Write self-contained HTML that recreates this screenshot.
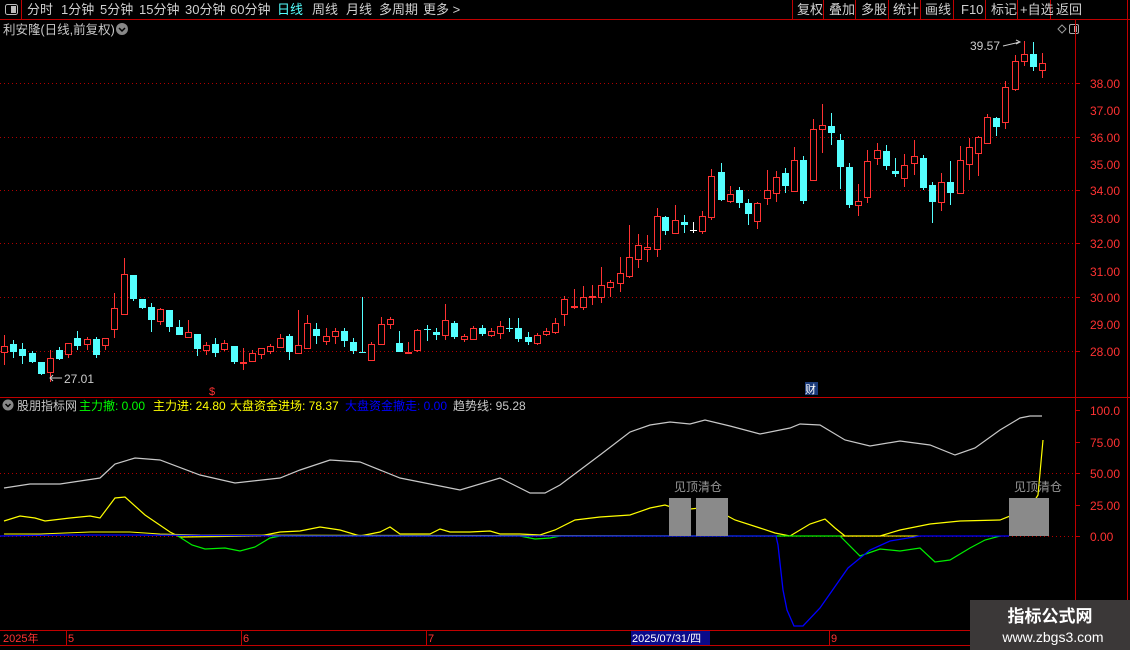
<!DOCTYPE html>
<html><head><meta charset="utf-8">
<style>
html,body{margin:0;padding:0;background:#000;width:1130px;height:650px;overflow:hidden}
svg{display:block}
text{font-family:"Liberation Sans","Noto Sans CJK SC",sans-serif}
.r line{stroke:#ff3232;stroke-width:1}
.r rect{fill:#000;stroke:#ff3232;stroke-width:1}
.c line{stroke:#54ffff;stroke-width:1}
.c rect{fill:#54ffff}
</style></head><body>
<svg width="1130" height="650" xmlns="http://www.w3.org/2000/svg">
<rect width="1130" height="650" fill="#000"/>
<line x1="0" y1="19.5" x2="1130" y2="19.5" stroke="#c00000"/>
<line x1="21.5" y1="0" x2="21.5" y2="19" stroke="#c00000"/>
<rect x="5.5" y="4.5" width="12" height="10" rx="2" fill="none" stroke="#bbb"/>
<rect x="11" y="6" width="5" height="7" fill="#bbb"/>
<g font-size="13" fill="#d0d0d0">
<text x="27" y="14">分时</text><text x="61" y="14">1分钟</text><text x="100" y="14">5分钟</text><text x="139" y="14">15分钟</text><text x="185" y="14">30分钟</text><text x="230" y="14">60分钟</text>
<text x="277" y="14" fill="#54ffff">日线</text><text x="312" y="14">周线</text><text x="346" y="14">月线</text><text x="379" y="14">多周期</text><text x="423" y="14">更多 &gt;</text>
</g>
<g stroke="#c00000"><line x1="792.5" y1="0" x2="792.5" y2="19"/><line x1="823.5" y1="0" x2="823.5" y2="19"/><line x1="855.5" y1="0" x2="855.5" y2="19"/><line x1="888.5" y1="0" x2="888.5" y2="19"/><line x1="920.5" y1="0" x2="920.5" y2="19"/><line x1="953.5" y1="0" x2="953.5" y2="19"/><line x1="985.5" y1="0" x2="985.5" y2="19"/><line x1="1017.5" y1="0" x2="1017.5" y2="19"/><line x1="1050.5" y1="0" x2="1050.5" y2="19"/><line x1="1127.5" y1="0" x2="1127.5" y2="650"/></g>
<g font-size="13" fill="#d0d0d0">
<text x="797" y="14">复权</text><text x="829" y="14">叠加</text><text x="861" y="14">多股</text><text x="893" y="14">统计</text><text x="925" y="14">画线</text><text x="961" y="14">F10</text><text x="991" y="14">标记</text><text x="1020" y="14">+自选</text><text x="1056" y="14">返回</text>
</g>
<text x="3" y="34" font-size="12.5" fill="#c8c8c8">利安隆(日线,前复权)</text>
<circle cx="122" cy="29" r="6" fill="#888"/><path d="M119 28l3 3 3-3" stroke="#000" stroke-width="1.5" fill="none"/>
<path d="M1062 25l4 4-4 4-4-4z" fill="none" stroke="#999"/>
<rect x="1069.5" y="24.5" width="9" height="9" rx="1.5" fill="none" stroke="#aaa"/><rect x="1074" y="26" width="3" height="6" fill="#aaa"/>
<line x1="1075.5" y1="20" x2="1075.5" y2="645" stroke="#c00000"/>
<line x1="0" y1="397.5" x2="1130" y2="397.5" stroke="#c00000"/>
<line x1="0" y1="630.5" x2="1130" y2="630.5" stroke="#c00000"/>
<line x1="0" y1="645.5" x2="1130" y2="645.5" stroke="#c00000"/>
<g stroke="#b00000" stroke-dasharray="1,3">
<line x1="0" y1="83.5" x2="1075" y2="83.5"/><line x1="0" y1="137.5" x2="1075" y2="137.5"/><line x1="0" y1="190.5" x2="1075" y2="190.5"/><line x1="0" y1="243.5" x2="1075" y2="243.5"/><line x1="0" y1="297.5" x2="1075" y2="297.5"/><line x1="0" y1="351.5" x2="1075" y2="351.5"/>
<line x1="0" y1="473.5" x2="1075" y2="473.5"/><line x1="0" y1="536.5" x2="1075" y2="536.5"/>
</g>
<g font-size="12" fill="#ff3232">
<text x="1090" y="88">38.00</text><text x="1090" y="115">37.00</text><text x="1090" y="142">36.00</text><text x="1090" y="169">35.00</text><text x="1090" y="195">34.00</text><text x="1090" y="223">33.00</text><text x="1090" y="248">32.00</text><text x="1090" y="276">31.00</text><text x="1090" y="302">30.00</text><text x="1090" y="329">29.00</text><text x="1090" y="356">28.00</text>
<text x="1090" y="415">100.0</text><text x="1090" y="447">75.00</text><text x="1090" y="478">50.00</text><text x="1090" y="510">25.00</text><text x="1090" y="541">0.00</text>
</g>
<g stroke="#c00000"><line x1="1075" y1="83.5" x2="1080" y2="83.5"/><line x1="1075" y1="137.5" x2="1080" y2="137.5"/><line x1="1075" y1="190.5" x2="1080" y2="190.5"/><line x1="1075" y1="243.5" x2="1080" y2="243.5"/><line x1="1075" y1="297.5" x2="1080" y2="297.5"/><line x1="1075" y1="351.5" x2="1080" y2="351.5"/><line x1="1075" y1="410.5" x2="1080" y2="410.5"/><line x1="1075" y1="442.5" x2="1080" y2="442.5"/><line x1="1075" y1="473.5" x2="1080" y2="473.5"/><line x1="1075" y1="505.5" x2="1080" y2="505.5"/><line x1="1075" y1="536.5" x2="1080" y2="536.5"/></g>

<!-- cyan candles -->
<g class="c">
<line x1="13.5" y1="340" x2="13.5" y2="358"/><rect x="10" y="344" width="7" height="8"/>
<line x1="22.5" y1="343" x2="22.5" y2="364"/><rect x="19" y="349" width="7" height="7"/>
<line x1="32.5" y1="351" x2="32.5" y2="363"/><rect x="29" y="353" width="7" height="9"/>
<line x1="41.5" y1="362" x2="41.5" y2="375"/><rect x="38" y="362" width="7" height="12"/>
<line x1="59.5" y1="347" x2="59.5" y2="360"/><rect x="56" y="350" width="7" height="9"/>
<line x1="77.5" y1="331" x2="77.5" y2="350"/><rect x="74" y="338" width="7" height="8"/>
<line x1="96.5" y1="337" x2="96.5" y2="358"/><rect x="93" y="339" width="7" height="16"/>
<line x1="133.5" y1="275" x2="133.5" y2="301"/><rect x="130" y="275" width="7" height="24"/>
<line x1="142.5" y1="299" x2="142.5" y2="309"/><rect x="139" y="299" width="7" height="9"/>
<line x1="151.5" y1="303" x2="151.5" y2="332"/><rect x="148" y="307" width="7" height="13"/>
<line x1="169.5" y1="310" x2="169.5" y2="332"/><rect x="166" y="310" width="7" height="17"/>
<line x1="179.5" y1="320" x2="179.5" y2="335"/><rect x="176" y="327" width="7" height="8"/>
<line x1="197.5" y1="334" x2="197.5" y2="356"/><rect x="194" y="334" width="7" height="15"/>
<line x1="215.5" y1="338" x2="215.5" y2="357"/><rect x="212" y="344" width="7" height="9"/>
<line x1="234.5" y1="346" x2="234.5" y2="364"/><rect x="231" y="346" width="7" height="16"/>
<line x1="289.5" y1="334" x2="289.5" y2="360"/><rect x="286" y="336" width="7" height="16"/>
<line x1="316.5" y1="323" x2="316.5" y2="344"/><rect x="313" y="329" width="7" height="7"/>
<line x1="344.5" y1="328" x2="344.5" y2="347"/><rect x="341" y="331" width="7" height="10"/>
<line x1="353.5" y1="338" x2="353.5" y2="354"/><rect x="350" y="342" width="7" height="9"/>
<line x1="362.5" y1="297" x2="362.5" y2="353"/><rect x="359" y="352" width="7" height="1"/>
<line x1="399.5" y1="331" x2="399.5" y2="352"/><rect x="396" y="343" width="7" height="9"/>
<line x1="427.5" y1="325" x2="427.5" y2="341"/><rect x="424" y="329" width="7" height="1"/>
<line x1="436.5" y1="328" x2="436.5" y2="340"/><rect x="433" y="332" width="7" height="3"/>
<line x1="454.5" y1="321" x2="454.5" y2="339"/><rect x="451" y="323" width="7" height="14"/>
<line x1="482.5" y1="325" x2="482.5" y2="336"/><rect x="479" y="328" width="7" height="6"/>
<line x1="509.5" y1="318" x2="509.5" y2="332"/><rect x="506" y="328" width="7" height="1"/>
<line x1="518.5" y1="318" x2="518.5" y2="342"/><rect x="515" y="328" width="7" height="11"/>
<line x1="528.5" y1="332" x2="528.5" y2="345"/><rect x="525" y="337" width="7" height="5"/>
<line x1="665.5" y1="216" x2="665.5" y2="235"/><rect x="662" y="217" width="7" height="14"/>
<line x1="684.5" y1="215" x2="684.5" y2="233"/><rect x="681" y="222" width="7" height="3"/>
<line x1="721.5" y1="163" x2="721.5" y2="201"/><rect x="718" y="172" width="7" height="28"/>
<line x1="739.5" y1="187" x2="739.5" y2="208"/><rect x="736" y="190" width="7" height="13"/>
<line x1="748.5" y1="199" x2="748.5" y2="225"/><rect x="745" y="203" width="7" height="11"/>
<line x1="785.5" y1="168" x2="785.5" y2="193"/><rect x="782" y="173" width="7" height="13"/>
<line x1="803.5" y1="156" x2="803.5" y2="204"/><rect x="800" y="160" width="7" height="41"/>
<line x1="831.5" y1="113" x2="831.5" y2="145"/><rect x="828" y="126" width="7" height="7"/>
<line x1="840.5" y1="134" x2="840.5" y2="189"/><rect x="837" y="140" width="7" height="27"/>
<line x1="849.5" y1="163" x2="849.5" y2="208"/><rect x="846" y="167" width="7" height="38"/>
<line x1="886.5" y1="145" x2="886.5" y2="170"/><rect x="883" y="151" width="7" height="15"/>
<line x1="895.5" y1="158" x2="895.5" y2="177"/><rect x="892" y="171" width="7" height="3"/>
<line x1="923.5" y1="155" x2="923.5" y2="190"/><rect x="920" y="158" width="7" height="30"/>
<line x1="932.5" y1="182" x2="932.5" y2="223"/><rect x="929" y="185" width="7" height="17"/>
<line x1="950.5" y1="161" x2="950.5" y2="205"/><rect x="947" y="182" width="7" height="11"/>
<line x1="996.5" y1="117" x2="996.5" y2="136"/><rect x="993" y="118" width="7" height="9"/>
<line x1="1033.5" y1="42" x2="1033.5" y2="71"/><rect x="1030" y="54" width="7" height="13"/>
</g>
<!-- white cross -->
<path d="M693.5 222V233M690 230.5H697" stroke="#fff"/>
<!-- red candles -->
<g class="r">
<line x1="4.5" y1="335" x2="4.5" y2="365"/><rect x="1.5" y="346.5" width="6" height="6"/>
<line x1="50.5" y1="350" x2="50.5" y2="382"/><rect x="47.5" y="358.5" width="6" height="14"/>
<line x1="68.5" y1="343" x2="68.5" y2="358"/><rect x="65.5" y="343.5" width="6" height="11"/>
<line x1="87.5" y1="337" x2="87.5" y2="350"/><rect x="84.5" y="339.5" width="6" height="5"/>
<line x1="105.5" y1="338" x2="105.5" y2="350"/><rect x="102.5" y="338.5" width="6" height="7"/>
<line x1="114.5" y1="293" x2="114.5" y2="338"/><rect x="111.5" y="308.5" width="6" height="21"/>
<line x1="124.5" y1="258" x2="124.5" y2="314"/><rect x="121.5" y="274.5" width="6" height="40"/>
<line x1="160.5" y1="308" x2="160.5" y2="325"/><rect x="157.5" y="309.5" width="6" height="12"/>
<line x1="188.5" y1="320" x2="188.5" y2="337"/><rect x="185.5" y="332.5" width="6" height="5"/>
<line x1="206.5" y1="342" x2="206.5" y2="355"/><rect x="203.5" y="345.5" width="6" height="5"/>
<line x1="224.5" y1="340" x2="224.5" y2="351"/><rect x="221.5" y="343.5" width="6" height="6"/>
<line x1="243.5" y1="348" x2="243.5" y2="370"/><rect x="240.5" y="362.5" width="6" height="1"/>
<line x1="252.5" y1="350" x2="252.5" y2="362"/><rect x="249.5" y="353.5" width="6" height="8"/>
<line x1="261.5" y1="348" x2="261.5" y2="359"/><rect x="258.5" y="348.5" width="6" height="6"/>
<line x1="270.5" y1="344" x2="270.5" y2="354"/><rect x="267.5" y="346.5" width="6" height="5"/>
<line x1="280.5" y1="334" x2="280.5" y2="347"/><rect x="277.5" y="338.5" width="6" height="9"/>
<line x1="298.5" y1="310" x2="298.5" y2="353"/><rect x="295.5" y="345.5" width="6" height="8"/>
<line x1="307.5" y1="315" x2="307.5" y2="348"/><rect x="304.5" y="323.5" width="6" height="25"/>
<line x1="326.5" y1="328" x2="326.5" y2="345"/><rect x="323.5" y="336.5" width="6" height="5"/>
<line x1="335.5" y1="328" x2="335.5" y2="344"/><rect x="332.5" y="331.5" width="6" height="5"/>
<line x1="371.5" y1="342" x2="371.5" y2="361"/><rect x="368.5" y="344.5" width="6" height="16"/>
<line x1="381.5" y1="317" x2="381.5" y2="345"/><rect x="378.5" y="324.5" width="6" height="20"/>
<line x1="390.5" y1="317" x2="390.5" y2="329"/><rect x="387.5" y="319.5" width="6" height="5"/>
<line x1="408.5" y1="342" x2="408.5" y2="353"/><rect x="405.5" y="352.5" width="6" height="1"/>
<line x1="417.5" y1="329" x2="417.5" y2="352"/><rect x="414.5" y="330.5" width="6" height="20"/>
<line x1="445.5" y1="304" x2="445.5" y2="340"/><rect x="442.5" y="320.5" width="6" height="15"/>
<line x1="464.5" y1="334" x2="464.5" y2="342"/><rect x="461.5" y="336.5" width="6" height="3"/>
<line x1="473.5" y1="326" x2="473.5" y2="340"/><rect x="470.5" y="328.5" width="6" height="11"/>
<line x1="491.5" y1="328" x2="491.5" y2="337"/><rect x="488.5" y="331.5" width="6" height="4"/>
<line x1="500.5" y1="321" x2="500.5" y2="339"/><rect x="497.5" y="326.5" width="6" height="7"/>
<line x1="537.5" y1="333" x2="537.5" y2="345"/><rect x="534.5" y="335.5" width="6" height="8"/>
<line x1="546.5" y1="328" x2="546.5" y2="336"/><rect x="543.5" y="331.5" width="6" height="3"/>
<line x1="555.5" y1="318" x2="555.5" y2="334"/><rect x="552.5" y="323.5" width="6" height="9"/>
<line x1="564.5" y1="296" x2="564.5" y2="326"/><rect x="561.5" y="299.5" width="6" height="15"/>
<line x1="574.5" y1="289" x2="574.5" y2="309"/><rect x="571.5" y="306.5" width="6" height="1"/>
<line x1="583.5" y1="286" x2="583.5" y2="310"/><rect x="580.5" y="297.5" width="6" height="10"/>
<line x1="592.5" y1="285" x2="592.5" y2="305"/><rect x="589.5" y="296.5" width="6" height="1"/>
<line x1="601.5" y1="267" x2="601.5" y2="303"/><rect x="598.5" y="285.5" width="6" height="12"/>
<line x1="610.5" y1="280" x2="610.5" y2="297"/><rect x="607.5" y="282.5" width="6" height="5"/>
<line x1="620.5" y1="257" x2="620.5" y2="292"/><rect x="617.5" y="273.5" width="6" height="10"/>
<line x1="629.5" y1="225" x2="629.5" y2="278"/><rect x="626.5" y="257.5" width="6" height="19"/>
<line x1="638.5" y1="234" x2="638.5" y2="268"/><rect x="635.5" y="245.5" width="6" height="14"/>
<line x1="647.5" y1="235" x2="647.5" y2="262"/><rect x="644.5" y="247.5" width="6" height="2"/>
<line x1="657.5" y1="208" x2="657.5" y2="257"/><rect x="654.5" y="216.5" width="6" height="33"/>
<line x1="675.5" y1="205" x2="675.5" y2="234"/><rect x="672.5" y="220.5" width="6" height="13"/>
<line x1="702.5" y1="211" x2="702.5" y2="234"/><rect x="699.5" y="216.5" width="6" height="15"/>
<line x1="711.5" y1="169" x2="711.5" y2="220"/><rect x="708.5" y="176.5" width="6" height="41"/>
<line x1="730.5" y1="186" x2="730.5" y2="203"/><rect x="727.5" y="194.5" width="6" height="7"/>
<line x1="757.5" y1="202" x2="757.5" y2="229"/><rect x="754.5" y="203.5" width="6" height="18"/>
<line x1="767.5" y1="170" x2="767.5" y2="205"/><rect x="764.5" y="190.5" width="6" height="8"/>
<line x1="776.5" y1="171" x2="776.5" y2="202"/><rect x="773.5" y="177.5" width="6" height="16"/>
<line x1="794.5" y1="147" x2="794.5" y2="192"/><rect x="791.5" y="160.5" width="6" height="31"/>
<line x1="813.5" y1="119" x2="813.5" y2="180"/><rect x="810.5" y="129.5" width="6" height="51"/>
<line x1="822.5" y1="104" x2="822.5" y2="153"/><rect x="819.5" y="125.5" width="6" height="4"/>
<line x1="858.5" y1="184" x2="858.5" y2="216"/><rect x="855.5" y="201.5" width="6" height="4"/>
<line x1="867.5" y1="150" x2="867.5" y2="203"/><rect x="864.5" y="161.5" width="6" height="36"/>
<line x1="877.5" y1="143" x2="877.5" y2="165"/><rect x="874.5" y="150.5" width="6" height="8"/>
<line x1="904.5" y1="154" x2="904.5" y2="187"/><rect x="901.5" y="165.5" width="6" height="13"/>
<line x1="914.5" y1="140" x2="914.5" y2="175"/><rect x="911.5" y="156.5" width="6" height="7"/>
<line x1="941.5" y1="173" x2="941.5" y2="211"/><rect x="938.5" y="182.5" width="6" height="20"/>
<line x1="960.5" y1="146" x2="960.5" y2="193"/><rect x="957.5" y="160.5" width="6" height="33"/>
<line x1="969.5" y1="138" x2="969.5" y2="180"/><rect x="966.5" y="147.5" width="6" height="17"/>
<line x1="978.5" y1="136" x2="978.5" y2="176"/><rect x="975.5" y="137.5" width="6" height="16"/>
<line x1="987.5" y1="114" x2="987.5" y2="143"/><rect x="984.5" y="117.5" width="6" height="26"/>
<line x1="1005.5" y1="81" x2="1005.5" y2="129"/><rect x="1002.5" y="87.5" width="6" height="35"/>
<line x1="1015.5" y1="55" x2="1015.5" y2="91"/><rect x="1012.5" y="61.5" width="6" height="28"/>
<line x1="1024.5" y1="41" x2="1024.5" y2="66"/><rect x="1021.5" y="54.5" width="6" height="7"/>
<line x1="1042.5" y1="53" x2="1042.5" y2="78"/><rect x="1039.5" y="63.5" width="6" height="7"/>
</g>
<text x="970" y="50" font-size="12" fill="#ccc">39.57</text><path d="M1003 46 L1020 42 M1016 40l4 2-4 2" stroke="#ccc" fill="none"/>
<text x="64" y="383" font-size="12" fill="#ccc">27.01</text><path d="M62 378 H50 M53 375l-3 3 3 3" stroke="#ccc" fill="none"/>
<text x="209" y="395" font-size="11" fill="#ff3232">$</text>
<rect x="805" y="382" width="13" height="13" fill="#1a3a7a"/><text x="805" y="393" font-size="11" fill="#fff">财</text>
<circle cx="8" cy="405" r="5.5" fill="#888"/><path d="M5.5 404l2.5 2.5 2.5-2.5" stroke="#000" stroke-width="1.5" fill="none"/>
<g font-size="12">
<text x="17" y="410" fill="#c8c8c8">股朋指标网</text>
<text x="79" y="410" fill="#00ff00">主力撤: 0.00</text>
<text x="153" y="410" fill="#ffff00">主力进: 24.80</text>
<text x="230" y="410" fill="#ffff00">大盘资金进场: 78.37</text>
<text x="345" y="410" fill="#0000ff">大盘资金撤走: 0.00</text>
<text x="453" y="410" fill="#c8c8c8">趋势线: 95.28</text>
</g>
<polyline fill="none" stroke="#c8c8c8" stroke-width="1.2" points="4,488 30,484 60,484 100,478 115,464 135,458 160,460 200,475 235,483 280,478 300,470 330,460 360,462 400,478 430,484 460,490 500,478 530,493 545,493 560,485 600,455 630,432 650,425 670,422 690,424 705,420 730,426 760,434 790,428 800,424 820,425 845,440 870,446 900,441 930,445 955,455 975,448 1000,430 1020,418 1030,416 1042,416"/>
<polyline fill="none" stroke="#ffff00" stroke-width="1.2" points="4,521 20,516 35,518 45,521 70,518 90,516 100,518 115,498 125,497 145,515 170,532 180,537 260,536 280,532 300,531 320,527 340,530 360,536 380,532 390,527 400,534 430,534 440,529 450,532 470,532 490,531 500,534 520,534 540,535 555,530 575,520 600,517 630,515 650,508 665,505 680,510 700,508 720,512 735,520 760,528 775,533 790,536 810,524 825,519 835,528 845,536 880,536 900,530 930,524 960,521 1000,520 1030,508 1038,495 1043,440"/>
<polyline fill="none" stroke="#ffff00" stroke-width="1" points="4,534 40,534 90,532 130,532 160,534 200,535 750,536 1009,536"/>
<polyline fill="none" stroke="#00ee00" stroke-width="1.2" points="178,536 192,545 205,549 225,548 240,551 255,547 270,538 280,536 390,536 520,536 535,539 550,538 560,536 840,536 860,556 880,549 900,551 920,548 935,562 950,560 970,548 985,540 1000,536"/>
<polyline fill="none" stroke="#0000ff" stroke-width="1.3" points="0,536 60,535 130,535 300,536 600,536 776,536 778,545 783,590 787,610 794,626 803,626 820,608 848,568 870,550 890,541 920,536 1009,536"/>
<rect x="669" y="498" width="22" height="38" fill="#8a8a8a"/>
<rect x="696" y="498" width="32" height="38" fill="#8a8a8a"/>
<rect x="1009" y="498" width="40" height="38" fill="#8a8a8a"/>
<text x="674" y="491" font-size="12" fill="#999">见顶清仓</text>
<text x="1014" y="491" font-size="12" fill="#999">见顶清仓</text>
<g font-size="11" fill="#ff3232">
<text x="3" y="642">2025年</text><text x="68" y="642">5</text><text x="243" y="642">6</text><text x="428" y="642">7</text><text x="831" y="642">9</text>
</g>
<g stroke="#c00000"><line x1="66.5" y1="630" x2="66.5" y2="645"/><line x1="241.5" y1="630" x2="241.5" y2="645"/><line x1="426.5" y1="630" x2="426.5" y2="645"/><line x1="829.5" y1="630" x2="829.5" y2="645"/></g>
<rect x="631" y="631" width="79" height="14" fill="#0a0a8a"/>
<text x="632" y="642" font-size="11" fill="#fff">2025/07/31/四</text>
<rect x="970" y="600" width="160" height="50" fill="#3b3838"/>
<text x="1050" y="622" font-size="17" font-weight="bold" fill="#fff" text-anchor="middle">指标公式网</text>
<text x="1053" y="642" font-size="14" fill="#fff" text-anchor="middle">www.zbgs3.com</text>
</svg>
</body></html>
